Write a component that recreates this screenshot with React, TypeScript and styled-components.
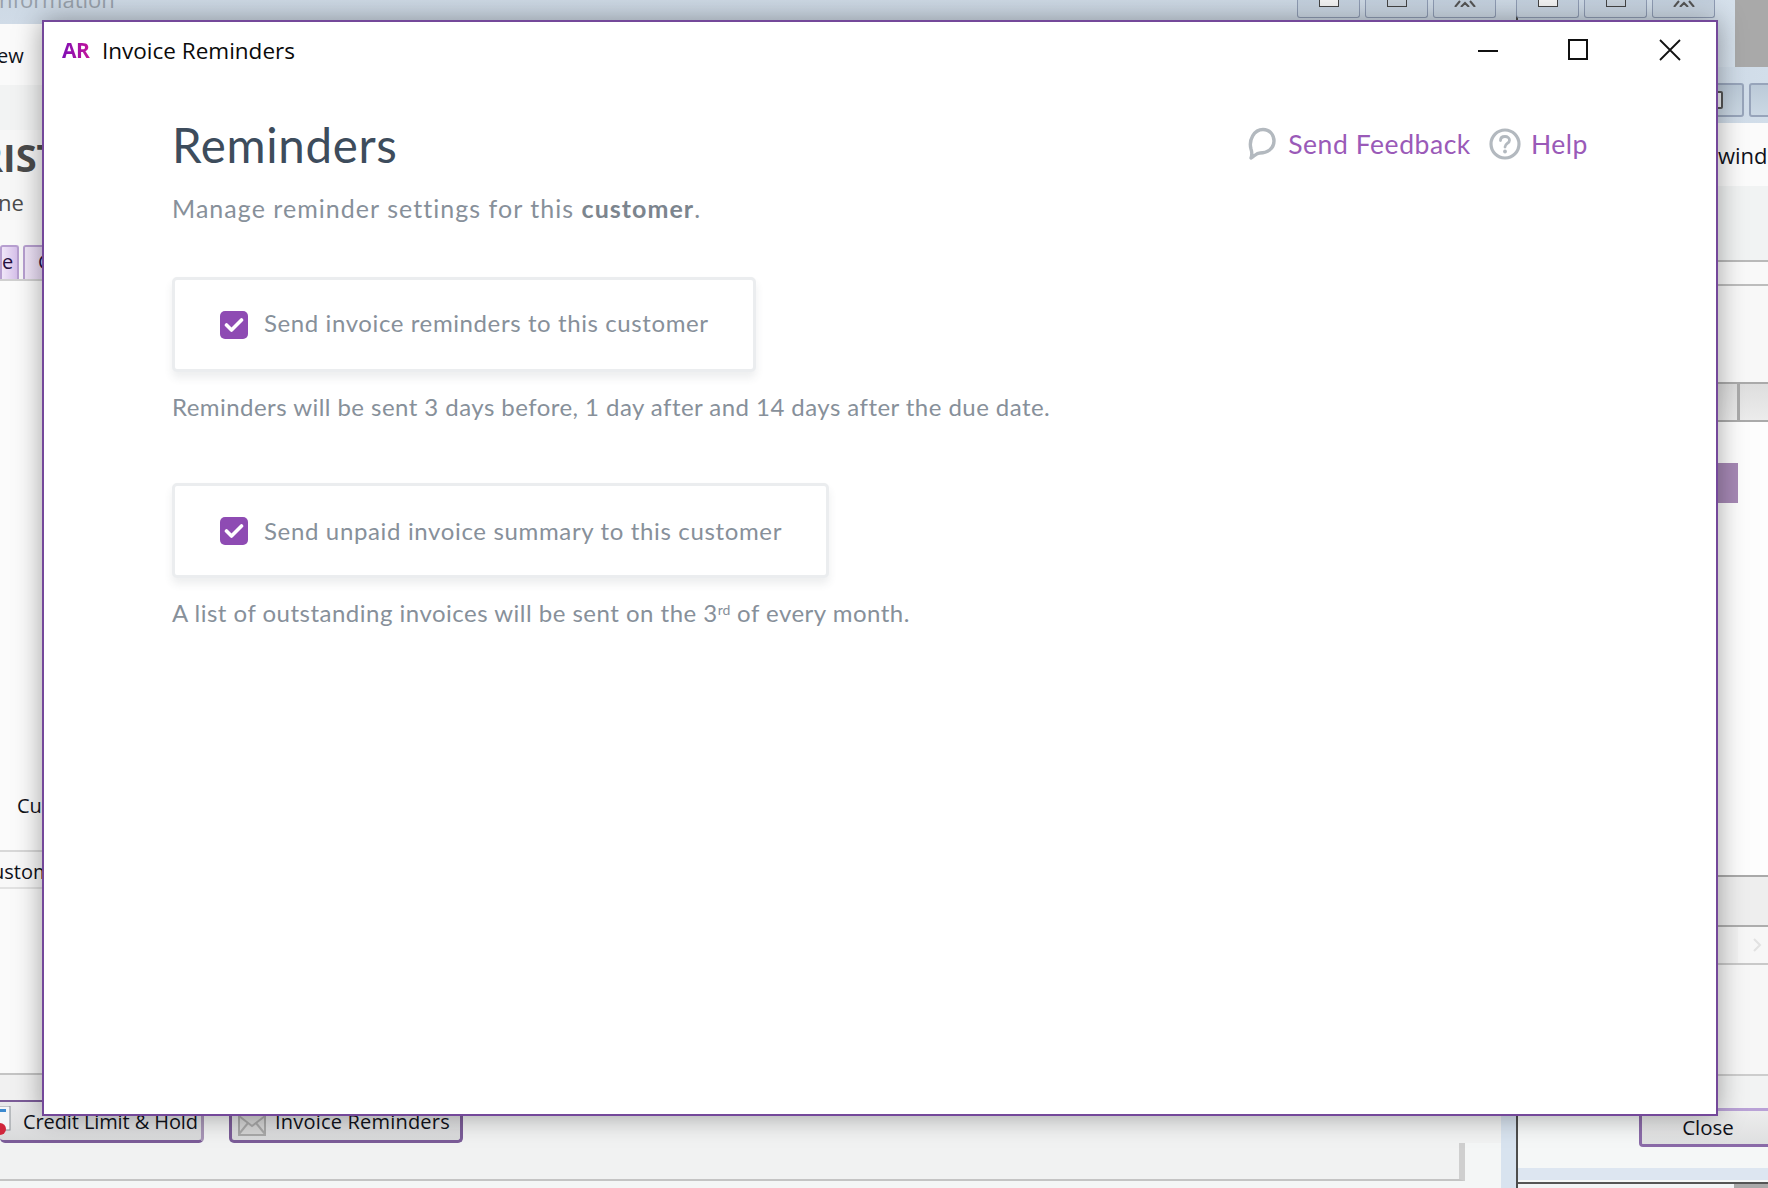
import React from "react";
import styled, { createGlobalStyle } from "styled-components";

const Global = createGlobalStyle`
  html, body { margin: 0; padding: 0; background: #a9a9a9; }
  * { box-sizing: border-box; }
`;

const Desktop = styled.div`
  position: relative;
  width: 1768px;
  height: 1188px;
  overflow: hidden;
  background: #a9a9a9;
  font-family: "Open Sans", "Liberation Sans", sans-serif;
  color: #10121a;
`;

/* ---------- windows behind the dialog ---------- */
const MainWindow = styled.div`
  position: absolute;
  left: 0;
  top: 0;
  width: 1518px;
  height: 1188px;
  display: flex;
  flex-direction: column;
  border-right: 2px solid #4d4d4d;
`;
const SecondWindow = styled.div`
  position: absolute;
  left: 1518px;
  top: 0;
  width: 217px;
  height: 68px;
  background: linear-gradient(90deg, #c9d6e3, #d6e1ec);
  display: flex;
  justify-content: flex-end;
  align-items: flex-start;
  padding-right: 20px;
`;
const ThirdWindow = styled.div`
  position: absolute;
  left: 1518px;
  top: 67px;
  right: 0;
  height: 1117px;
  display: flex;
  flex-direction: column;
  background: #f5f7f7;
  border-bottom: 2px solid #555;
`;
const BottomEdge = styled.div`
  position: absolute;
  left: 1518px;
  top: 1184px;
  width: 216px;
  height: 4px;
  background: #f2f4f6;
`;
const TitleBand = styled.div`
  height: 24px;
  flex: none;
  display: flex;
  justify-content: space-between;
  align-items: flex-start;
  padding-right: 20px;
  background: linear-gradient(180deg, #cdd9e5, #d0dbe7);
  overflow: hidden;
`;
const FadedTitle = styled.span`
  font-size: 22px;
  line-height: 24px;
  margin-top: -13px;
  margin-left: -1px;
  color: #97a0aa;
`;
const ButtonGroup = styled.div`
  display: flex;
  gap: 5px;
`;
const WinButton = styled.div`
  width: 63px;
  height: 18px;
  border: 1px solid #8f9cb4;
  border-top: none;
  border-radius: 0 0 3px 3px;
  background: linear-gradient(180deg, #c3d0de, #d0dce8);
  display: flex;
  justify-content: center;
`;
const WinGlyph = styled.div<{ $dark?: boolean }>`
  width: 20px;
  height: 7px;
  background: ${(p) => (p.$dark ? "#c9d3dd" : "#f4f4f4")};
  border: 1px solid #444;
  border-top: none;
`;
const InnerRow = styled.div`
  flex: 1;
  display: flex;
  min-height: 0;
`;
const InnerColumn = styled.div`
  flex: 1;
  display: flex;
  flex-direction: column;
  min-width: 0;
`;
const BlueStrip = styled.div`
  width: 15px;
  background: #d8e3ef;
`;
const Band = styled.div<{ $h: number; $bg?: string; $line?: string }>`
  height: ${(p) => p.$h}px;
  flex: none;
  background: ${(p) => p.$bg || "#f6f7f7"};
  border-bottom: ${(p) => (p.$line ? `2px solid ${p.$line}` : "none")};
  overflow: hidden;
`;
const BandText = styled.div<{ $x: number; $size?: number; $weight?: number; $color?: string; $top: number }>`
  padding-left: ${(p) => Math.max(p.$x, 0)}px;
  margin-left: ${(p) => Math.min(p.$x, 0)}px;
  padding-top: ${(p) => p.$top}px;
  font-size: ${(p) => p.$size || 20}px;
  font-weight: ${(p) => p.$weight || 400};
  color: ${(p) => p.$color || "#10121a"};
  line-height: 28px;
  white-space: nowrap;
`;
const TabStrip = styled.div`
  display: flex;
  gap: 4px;
  padding-top: 25px;
`;
const PurpleTab = styled.div<{ $w: number; $left?: boolean }>`
  width: ${(p) => p.$w}px;
  flex: none;
  height: 34px;
  border: 2px solid #b79fd0;
  border-bottom: none;
  border-radius: 3px 3px 0 0;
  background: linear-gradient(90deg, #f0e6f8, #d6c0ea);
  font-size: 20px;
  line-height: 30px;
  overflow: hidden;
  color: #241040;
  text-align: ${(p) => (p.$left ? "left" : "right")};
  padding: ${(p) => (p.$left ? "0 0 0 13px" : "0 12px 0 0")};
`;
const BottomTabs = styled.div`
  display: flex;
  gap: 25px;
  height: 41px;
  flex: none;
  background: #f1f2f2;
`;
const BottomTab = styled.div<{ $w: number; $active?: boolean; $pad: number; $ls: number }>`
  width: ${(p) => p.$w}px;
  flex: none;
  height: 100%;
  display: flex;
  align-items: flex-end;
  gap: 9px;
  padding: 0 0 4px ${(p) => p.$pad}px;
  font-size: 20px;
  letter-spacing: ${(p) => p.$ls}px;
  line-height: 28px;
  white-space: nowrap;
  background: linear-gradient(180deg, #e9e9eb, #d9dadb);
  border-bottom: 3px solid #7b5c98;
  border-right: 3px solid ${(p) => (p.$active ? "#7b5c98" : "#a795b6")};
  border-left: ${(p) => (p.$active ? "3px solid #7b5c98" : "none")};
  border-radius: 0 0 5px 5px;
`;
const FootPanel = styled.div`
  width: 1465px;
  height: 100%;
  background: #f1f2f2;
  border-right: 6px solid #cfcfcf;
  border-bottom: 2px solid #c4c4c4;
`;
const FootRest = styled.div`
  flex: 1;
  background: #f4f6f6;
`;
const ThirdBandRow = styled.div`
  display: flex;
  justify-content: flex-end;
  gap: 5px;
  padding-top: 16px;
  margin-right: -44px;
`;
const ThirdBtn = styled.div`
  width: 63px;
  height: 34px;
  flex: none;
  border: 2px solid #97a4ba;
  border-radius: 3px;
  background: linear-gradient(180deg, #bccad8, #cbd8e4);
  display: flex;
  align-items: center;
  justify-content: center;
`;
const ThirdGlyph = styled.div`
  width: 20px;
  height: 18px;
  border: 2px solid #555;
  border-radius: 2px;
  background: #eef1f4;
`;
const HeaderCells = styled.div`
  display: flex;
  height: 100%;
  padding-left: 200px;
`;
const HeaderCell = styled.div<{ $w?: number }>`
  width: ${(p) => (p.$w ? `${p.$w}px` : "auto")};
  flex: ${(p) => (p.$w ? "none" : 1)};
  background: linear-gradient(180deg, #dedede, #ececec);
  border-right: ${(p) => (p.$w ? "3px solid #aaa" : "none")};
`;
const SelectedBlock = styled.div`
  width: 220px;
  height: 40px;
  margin-top: 41px;
  background: #a688b5;
`;
const ChevronRow = styled.div`
  display: flex;
  justify-content: flex-end;
  height: 100%;
`;
const ChevronBox = styled.div`
  width: 30px;
  padding-left: 8px;
  background: #f7f7f7;
  display: flex;
  align-items: center;
  justify-content: center;
`;
const CloseRow = styled.div`
  display: flex;
  justify-content: flex-end;
  margin-right: -12px;
`;
const CloseButton = styled.div`
  width: 141px;
  height: 39px;
  flex: none;
  border: 3px solid #8a6aa8;
  border-top: 3px solid #b9a2d6;
  border-right: none;
  border-radius: 0 0 0 4px;
  background: linear-gradient(180deg, #ededed, #dedfe0);
  font-size: 20.5px;
  line-height: 33px;
  text-align: center;
  padding-right: 6px;
`;

/* ---------- dialog ---------- */
const Dialog = styled.div`
  position: absolute;
  left: 42px;
  top: 20px;
  width: 1676px;
  height: 1096px;
  background: #fff;
  border: 2px solid #74489a;
  box-shadow: 0 0 26px rgba(0, 0, 0, 0.36);
  display: flex;
  flex-direction: column;
`;
const TitleBar = styled.div`
  height: 48px;
  flex: none;
  display: flex;
  align-items: center;
  padding: 9px 0 0 18px;
`;
const Logo = styled.span`
  font-family: "Open Sans", sans-serif;
  font-weight: 700;
  font-size: 21px;
  letter-spacing: -0.5px;
  background: linear-gradient(90deg, #7f0fb5, #e0188f);
  -webkit-background-clip: text;
  background-clip: text;
  color: transparent;
  width: 40px;
  margin-top: -2px;
`;
const TitleText = styled.span`
  font-family: "Open Sans", sans-serif;
  font-size: 22.5px;
  color: #0a0a0a;
  flex: 1;
`;
const Controls = styled.div`
  display: flex;
  align-items: center;
  padding-right: 35px;
  gap: 70px;
  margin-top: -1px;
`;
const CloseIcon = styled.svg`
  margin-left: 1px;
`;
const Content = styled.div`
  padding: 46px 128px 0 128px;
  font-family: Lato, "Open Sans", sans-serif;
`;
const HeadRow = styled.div`
  display: flex;
  justify-content: space-between;
  align-items: center;
`;
const Heading = styled.h1`
  margin: 0;
  font-size: 47.5px;
  font-weight: 400;
  line-height: 58px;
  letter-spacing: 0.65px;
  color: #3d4c5c;
`;
const Links = styled.div`
  display: flex;
  align-items: center;
  margin-top: -2px;
`;
const LinkItem = styled.a<{ $gap: number }>`
  display: flex;
  align-items: center;
  gap: ${(p) => p.$gap}px;
  margin-left: 18px;
  font-size: 26.5px;
  letter-spacing: 0.55px;
  color: #9a5ab8;
`;
const Subtitle = styled.p`
  margin: 18px 0 0;
  font-size: 25px;
  line-height: 32px;
  letter-spacing: 1.04px;
  color: #87909a;
  b {
    font-weight: 700;
    color: #7c858e;
  }
`;
const Card = styled.label<{ $mt: number }>`
  display: flex;
  width: fit-content;
  height: 95px;
  align-items: center;
  gap: 16px;
  margin-top: ${(p) => p.$mt}px;
  padding: 0 44px 0 45px;
  background: #fff;
  border: 3px solid #ebedef;
  border-radius: 5px;
  box-shadow: 0 6px 9px rgba(60, 70, 80, 0.09);
`;
const Check = styled.span`
  width: 28px;
  height: 28px;
  flex: none;
  border-radius: 5px;
  background: #8e4bb3;
  display: flex;
  align-items: center;
  justify-content: center;
`;
const CardText = styled.span<{ $ls: number; $up?: number }>`
  font-size: 24px;
  letter-spacing: ${(p) => p.$ls}px;
  color: #87909a;
  margin-top: ${(p) => p.$up || 0}px;
`;
const Note = styled.p<{ $ls: number }>`
  margin: 19px 0 0;
  font-size: 24px;
  line-height: 32px;
  letter-spacing: ${(p) => p.$ls}px;
  color: #87909a;
  sup {
    font-size: 14px;
    line-height: 0;
    vertical-align: 7px;
    letter-spacing: 0;
  }
`;

const CheckMark = () => (
  <svg width="20" height="16" viewBox="0 0 20 16" fill="none">
    <path d="M2.5 8 L7.5 13 L17.5 3" stroke="#fff" strokeWidth="3.6" strokeLinecap="round" strokeLinejoin="round" />
  </svg>
);

const CloseGlyph = () => (
  <svg width="22" height="7" viewBox="0 0 22 7" fill="none">
    <path d="M1 7 L6 1 M21 7 L16 1 M7 7 L11 3 L15 7" stroke="#555" strokeWidth="2" />
  </svg>
);

const Row = ({ children, mt, ls, up }: { children: React.ReactNode; mt: number; ls: number; up?: number }) => (
  <Card $mt={mt}>
    <Check>
      <CheckMark />
    </Check>
    <CardText $ls={ls} $up={up}>{children}</CardText>
  </Card>
);

const Buttons = () => (
  <ButtonGroup>
    <WinButton><WinGlyph /></WinButton>
    <WinButton><WinGlyph $dark /></WinButton>
    <WinButton><CloseGlyph /></WinButton>
  </ButtonGroup>
);

export default function App() {
  return (
    <Desktop>
      <Global />
      <MainWindow>
        <TitleBand>
          <FadedTitle>nformation</FadedTitle>
          <Buttons />
        </TitleBand>
        <InnerRow>
          <InnerColumn>
            <Band $h={61} $bg="#fafafa"><BandText $x={-3} $top={18}>ew</BandText></Band>
            <Band $h={45} $bg="#f2f3f3" />
            <Band $h={45} $bg="#f7f7f7"><BandText $x={-22} $top={13} $size={38} $weight={700} $color="#4b4b4b">RIST</BandText></Band>
            <Band $h={45} $bg="#f7f7f7"><BandText $x={-2} $top={13} $size={22} $color="#4b4b4b">ne</BandText></Band>
            <Band $h={61} $bg="#f9f9f9" $line="#d0d0d0">
              <TabStrip>
                <PurpleTab $w={19}>e</PurpleTab>
                <PurpleTab $w={60} $left>C</PurpleTab>
              </TabStrip>
            </Band>
            <Band $h={571} $bg="#fbfbfb" $line="#d8d8d8"><BandText $x={17} $top={511}>Cu</BandText></Band>
            <Band $h={37} $bg="#f8f8f8" $line="#e2e2e2"><BandText $x={-8} $top={6}>ustomer</BandText></Band>
            <Band $h={186} $bg="#fafafa" $line="#c4c4c4" />
            <Band $h={27} $bg="#f1f1f1" $line="#7b5c98" />
            <BottomTabs>
              <BottomTab $w={204} $pad={0} $ls={-0.1}>
                <svg width="14" height="30" viewBox="0 0 14 30" fill="none">
                  <rect x="-8" y="0" width="18" height="24" fill="#f4f6f8" stroke="#8a8f96" />
                  <rect x="-8" y="3" width="14" height="3" fill="#3c8ad0" />
                  <circle cx="0" cy="23" r="6" fill="#d0263c" />
                </svg>
                Credit Limit &amp; Hold
              </BottomTab>
              <BottomTab $w={234} $active $pad={6} $ls={0.2}>
                <svg width="28" height="22" viewBox="0 0 28 22" fill="#d5d5d5" stroke="#a8a8a8" strokeWidth="2">
                  <rect x="1" y="1" width="26" height="20" />
                  <path d="M1 2 L14 12 L27 2 M1 20 L10 9 M27 20 L18 9" fill="none" />
                </svg>
                Invoice Reminders
              </BottomTab>
            </BottomTabs>
            <Band $h={38} $bg="#f4f6f6"><FootPanel /></Band>
            <FootRest />
          </InnerColumn>
          <BlueStrip />
        </InnerRow>
      </MainWindow>
      <SecondWindow>
        <Buttons />
      </SecondWindow>
      <ThirdWindow>
        <Band $h={56} $bg="linear-gradient(90deg,#c2cfdc,#d2deea)">
          <ThirdBandRow>
            <ThirdBtn><ThirdGlyph /></ThirdBtn>
            <ThirdBtn />
          </ThirdBandRow>
        </Band>
        <Band $h={63} $bg="#fbfbfb"><BandText $x={200} $top={18} $size={22}>window</BandText></Band>
        <Band $h={76} $bg="#f1f3f3" $line="#b9b9b9" />
        <Band $h={24} $bg="#f9f9f9" $line="#bdbdbd" />
        <Band $h={98} $bg="#f8f8f8" $line="#aaaaaa" />
        <Band $h={38} $line="#aaaaaa">
          <HeaderCells>
            <HeaderCell $w={22} />
            <HeaderCell />
          </HeaderCells>
        </Band>
        <Band $h={455} $bg="#fdfdfd" $line="#a9a9a9"><SelectedBlock /></Band>
        <Band $h={50} $bg="#eeeeee" $line="#adadad" />
        <Band $h={38} $bg="#f1f1f1" $line="#c9c9c9">
          <ChevronRow>
            <ChevronBox>
              <svg width="10" height="16" viewBox="0 0 10 16" fill="none">
                <path d="M2 2 L8 8 L2 14" stroke="#e2e2e2" strokeWidth="2" />
              </svg>
            </ChevronBox>
          </ChevronRow>
        </Band>
        <Band $h={111} $bg="#f7f7f7" $line="#cdcdcd" />
        <Band $h={32} $bg="#f2f3f3" />
        <Band $h={60} $bg="#f5f7f7">
          <CloseRow>
            <CloseButton>Close</CloseButton>
          </CloseRow>
        </Band>
        <Band $h={12} $bg="#dde6f1" />
      </ThirdWindow>
      <BottomEdge />

      <Dialog>
        <TitleBar>
          <Logo>AR</Logo>
          <TitleText>Invoice Reminders</TitleText>
          <Controls>
            <svg width="20" height="22" viewBox="0 0 20 22"><rect x="0" y="11" width="20" height="2" fill="#111" /></svg>
            <svg width="20" height="22" viewBox="0 0 20 22" fill="none"><rect x="1" y="1" width="18" height="19" stroke="#111" strokeWidth="2" /></svg>
            <CloseIcon width="22" height="22" viewBox="0 0 22 22" fill="none"><path d="M1 1 L21 21 M21 1 L1 21" stroke="#111" strokeWidth="1.8" /></CloseIcon>
          </Controls>
        </TitleBar>
        <Content>
          <HeadRow>
            <Heading>Reminders</Heading>
            <Links>
              <LinkItem $gap={12}>
                <svg width="28" height="34" viewBox="0 0 28 34" fill="none">
                  <path d="M3 31 C4.5 27 4 25 3 22 C0.5 13 6 2.5 15 2.5 C22 2.5 26 8 26 14 C26 22 19 26 12 26 C8.5 26 6.5 29 3 31 Z" stroke="#b3b9bf" strokeWidth="3.4" strokeLinejoin="round" />
                </svg>
                Send Feedback
              </LinkItem>
              <LinkItem $gap={10}>
                <svg width="32" height="34" viewBox="0 0 32 34" fill="none">
                  <circle cx="16" cy="17" r="14" stroke="#b3b9bf" strokeWidth="3.2" />
                  <path d="M11.5 13.5 C11.5 10.5 13.5 9.5 16 9.5 C18.5 9.5 20.5 11 20.5 13.2 C20.5 16.5 16 16.5 16 20" stroke="#b3b9bf" strokeWidth="2.8" strokeLinecap="round" />
                  <circle cx="16" cy="24.5" r="1.9" fill="#b3b9bf" />
                </svg>
                Help
              </LinkItem>
            </Links>
          </HeadRow>
          <Subtitle>
            Manage reminder settings for this <b>customer</b>.
          </Subtitle>
          <Row mt={53} ls={0.6} up={-4}>Send invoice reminders to this customer</Row>
          <Note $ls={0.45}>Reminders will be sent 3 days before, 1 day after and 14 days after the due date.</Note>
          <Row mt={60} ls={0.65}>Send unpaid invoice summary to this customer</Row>
          <Note $ls={0.49}>
            A list of outstanding invoices will be sent on the 3<sup>rd</sup> of every month.
          </Note>
        </Content>
      </Dialog>
    </Desktop>
  );
}
